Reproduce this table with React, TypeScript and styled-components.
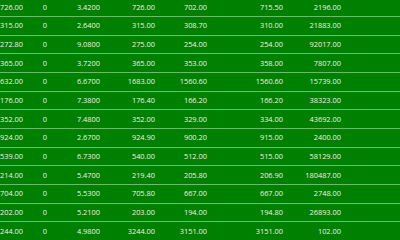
import styled, { createGlobalStyle } from 'styled-components';

const GlobalStyle = createGlobalStyle`
	html, body {
		margin: 0;
		padding: 0;
		background: #008000;
		overflow: hidden;
	}
	#root {
		width: 400px;
		height: 240px;
		overflow: hidden;
	}
`;

const Grid = styled.div`
	display: flex;
	flex-direction: column;
	margin-top: -1.5px;
	width: 400px;
	background: #008000;
	font-family: 'Open Sans', 'Noto Sans', sans-serif;
	font-size: 7.4px;
	color: #eef4e6;
`;

const Row = styled.div`
	display: grid;
	grid-template-columns: 23px 24px 53px 55px 52px 76px 58px 1fr;
	align-items: center;
	height: 17.67px;
	border-bottom: 1px solid #68bd68;
`;

const Cell = styled.div`
	text-align: right;
	white-space: nowrap;
	line-height: 1;
`;

const rows: string[][] = [
	['726.00', '0', '3.4200', '726.00', '702.00', '715.50', '2196.00'],
	['315.00', '0', '2.6400', '315.00', '308.70', '310.00', '21883.00'],
	['272.80', '0', '9.0800', '275.00', '254.00', '254.00', '92017.00'],
	['365.00', '0', '3.7200', '365.00', '353.00', '358.00', '7807.00'],
	['632.00', '0', '6.6700', '1683.00', '1560.60', '1560.60', '15739.00'],
	['176.00', '0', '7.3800', '176.40', '166.20', '166.20', '38323.00'],
	['352.00', '0', '7.4800', '352.00', '329.00', '334.00', '43692.00'],
	['924.00', '0', '2.6700', '924.90', '900.20', '915.00', '2400.00'],
	['539.00', '0', '6.7300', '540.00', '512.00', '515.00', '58129.00'],
	['214.00', '0', '5.4700', '219.40', '205.80', '206.90', '180487.00'],
	['704.00', '0', '5.5300', '705.80', '667.00', '667.00', '2748.00'],
	['202.00', '0', '5.2100', '203.00', '194.00', '194.80', '26893.00'],
	['244.00', '0', '4.9800', '3244.00', '3151.00', '3151.00', '102.00'],
];

const App = () => {
	return (
		<>
			<GlobalStyle />
			<Grid>
				{rows.map((r, i) => (
					<Row key={i}>
						{r.map((v, j) => (
							<Cell key={j}>{v}</Cell>
						))}
						<Cell />
					</Row>
				))}
			</Grid>
		</>
	);
};

export default App;
